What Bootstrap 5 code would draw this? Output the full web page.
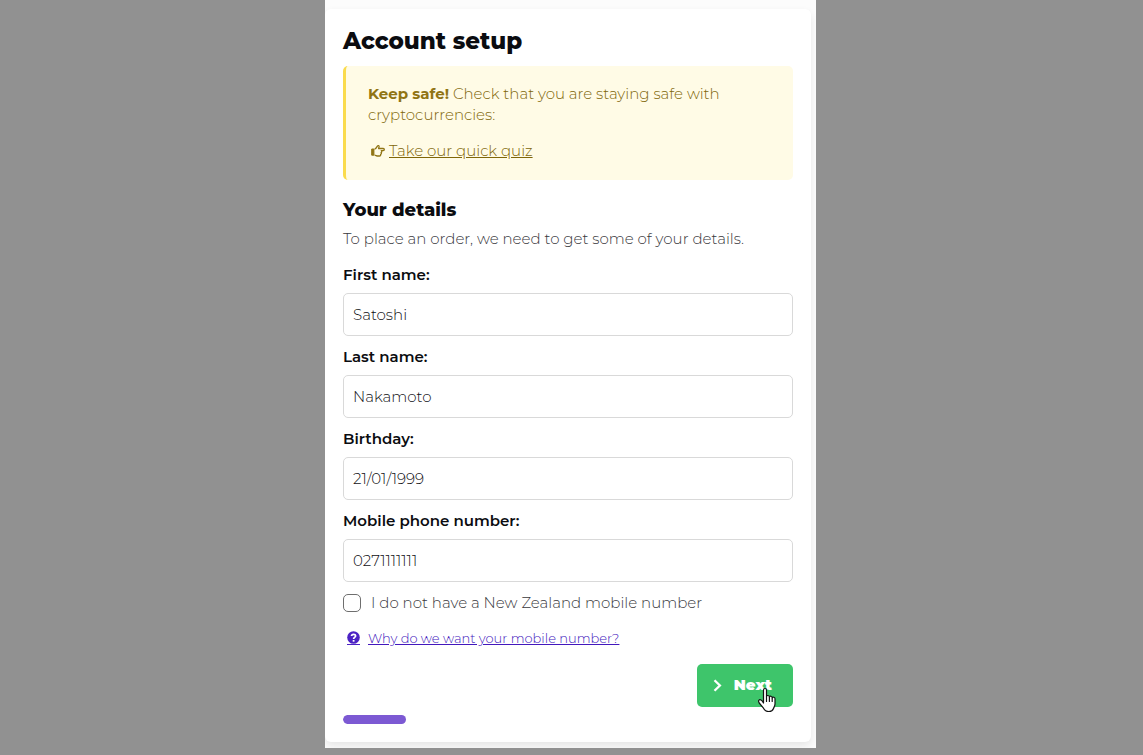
<!DOCTYPE html>
<html lang="en">
<head>
<meta charset="utf-8">
<meta name="viewport" content="width=device-width, initial-scale=1">
<title>Account setup</title>
<link href="https://cdn.jsdelivr.net/npm/bootstrap@5.3.0/dist/css/bootstrap.min.css" rel="stylesheet">
<style>
body{background:#919191;color:#38383c;font:300 15px/21px Montserrat,Inter,"Open Sans",sans-serif;padding-right:2px}
.dialog-shell{max-width:491px;background:#fcfcfc;padding:9px 5px 6px 0;overflow:hidden}
.setup-card{background:#fff;border-radius:6px;padding:18px;box-shadow:0 4px 8px rgba(0,0,0,.09)}
h1,h2,.form-label{color:#0b0c10}
h1{font-size:23px;line-height:28px;font-weight:800;margin-bottom:11px}
h2{font-size:18px;line-height:24px;font-weight:800;margin:18px 0 5px}
.intro{line-height:24px;margin-bottom:13px}
.safe-note{background:#fffbe6;border-left:3px solid #fadb4d;border-radius:5px;padding:17px 18px 19px 22px;color:#806608}
.safe-note p{margin-bottom:15px}
.safe-note a{color:#806608}
.safe-note strong{font-weight:700;color:#907414}
.hand{margin:0 4px 0 3px}
.form-label{font-size:15px;font-weight:600;margin-bottom:8px;display:block}
.form-control{height:43px;border-color:#d9d9d9;border-radius:5px;padding:0 9px;font-size:15px;font-weight:300;color:#101014;margin-bottom:10px}
.form-check-input.tick{width:18px;height:18px;margin:0;border:1px solid #6e6e6e;border-radius:5px}
.tick-label{padding-left:10px}
.why-link{color:#4318bd;font-size:13px;line-height:20px;margin:15px 0 16px 4px}
.btn-next{background:#3ec56b;color:#fff;width:96px;height:43px;border-radius:5px;font-size:15px;font-weight:900;padding:0 20px 0 15px}
.btn-next:hover{background:#38b762;color:#fff}
.progress.steps{height:9px;margin-top:8px;background:transparent;border-radius:5px}
.steps .progress-bar{background:#7c59d3;border-radius:5px}
.pointer{position:absolute;left:60px;top:23px;pointer-events:none}
</style>
</head>
<body>
<main class="dialog-shell mx-auto">
<form class="setup-card">
  <h1>Account setup</h1>
  <div class="safe-note">
    <p><strong>Keep safe!</strong> Check that you are staying safe with cryptocurrencies:</p>
    <div class="d-flex align-items-center">
      <svg class="hand" width="14" height="14" viewBox="0 0 14 14" fill="none" stroke="#907414" stroke-width="1.3" stroke-linejoin="round" aria-hidden="true"><path d="M.7 5h2.200v6.200H.7z" fill="#907414" stroke-width="1"/><path d="M3.500 5.200C5 5 5.700 3.300 6.400 2.100c.6-1 1.900-.5 1.700.6L7.600 4.500h4.600c1.500 0 1.500 2.200 0 2.200H10.300c.7.500.6 1.700-.2 1.900.5.600.3 1.500-.5 1.700.2.900-.2 1.700-1 1.700H6.800c-1.300 0-2-.9-3.300-.9"/></svg>
      <a href="#quiz">Take our quick quiz</a>
    </div>
  </div>
  <h2>Your details</h2>
  <p class="intro">To place an order, we need to get some of your details.</p>
  <label class="form-label" for="first">First name:</label>
  <input class="form-control" id="first" type="text" value="Satoshi">
  <label class="form-label" for="last">Last name:</label>
  <input class="form-control" id="last" type="text" value="Nakamoto">
  <label class="form-label" for="birthday">Birthday:</label>
  <input class="form-control" id="birthday" type="text" value="21/01/1999">
  <label class="form-label" for="mobile">Mobile phone number:</label>
  <input class="form-control" id="mobile" type="tel" value="0271111111">
  <div class="d-flex align-items-center">
    <input class="form-check-input tick" id="nonz" type="checkbox">
    <label class="tick-label" for="nonz">I do not have a New Zealand mobile number</label>
  </div>
  <div class="d-flex">
    <a class="why-link d-flex align-items-center" href="#why">
      <svg class="me-2" width="13" height="14" viewBox="0 0 13 14" aria-hidden="true"><circle cx="6.500" cy="6.500" r="6.300" fill="#4c22c4"/><path d="M4.500 5c.1-2.300 4.200-2.300 4.100 0 0 1.400-2 1.400-2 2.900" fill="none" stroke="#fff" stroke-width="1.700"/><path d="M5.700 9h1.800v1.700H5.700z" fill="#fff"/><path d="M0 13.500h13" stroke="#4c22c4"/></svg>
      Why do we want your mobile number?</a>
  </div>
  <div class="d-flex justify-content-end">
    <div class="position-relative">
      <button class="btn btn-next d-flex align-items-center justify-content-between" type="submit">
        <svg width="9" height="13" viewBox="0 0 9 13" fill="none" stroke="#fff" stroke-width="2.300" aria-hidden="true"><path d="M1.500 1.200 6.900 6.500 1.500 11.800"/></svg>
        Next</button>
      <svg class="pointer" width="20" height="26" viewBox="0 0 20 26" fill="#fff" stroke="#111" stroke-width="1.200" stroke-linejoin="round" stroke-linecap="round" aria-hidden="true"><path d="M6.500 14.500V3c0-2 3-2 3 0v6.500c.3-1.500 2.900-1.300 2.900.5.500-1.300 2.800-1 2.800.8.600-1.100 2.800-.7 2.800 1V17c0 2-1 3-1.500 4.500-.7 2-2 3-4.500 3-3 0-4.500-1.200-5.500-3.300L2.200 16c-.8-1.500-.9-2.600 0-3.100 1.600-.8 3 .6 4.300 3.100z"/><path d="M9.500 9.500v5M12.400 10v4.500M15.200 11v3.500" fill="none"/></svg>
    </div>
  </div>
  <div class="progress steps" role="progressbar" aria-label="Setup progress" aria-valuenow="14" aria-valuemin="0" aria-valuemax="100">
    <div class="progress-bar" style="width:14%"></div>
  </div>
</form>
</main>
<script src="https://cdn.jsdelivr.net/npm/bootstrap@5.3.0/dist/js/bootstrap.bundle.min.js"></script>
</body>
</html>
